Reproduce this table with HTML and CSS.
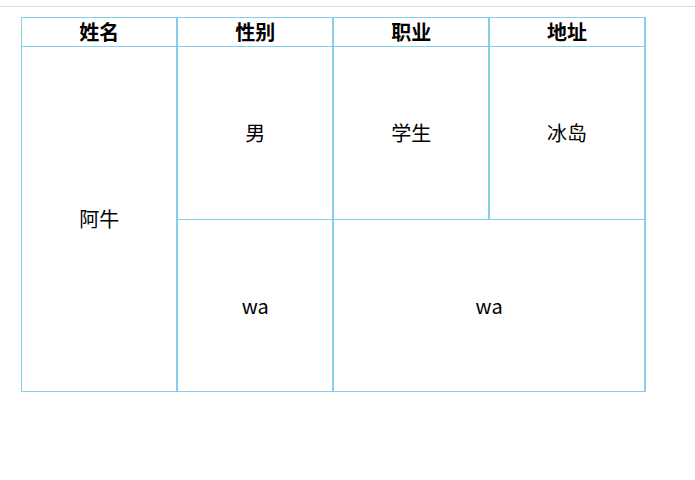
FILE: index.html
```html
<!DOCTYPE html>
<html lang="zh">
<head>
<meta charset="utf-8">
<title>表格</title>
<link rel="stylesheet" href="styles.css">
</head>
<body>
<div class="topline"></div>
<table class="info">
  <thead>
    <tr><th>姓名</th><th>性别</th><th>职业</th><th>地址</th></tr>
  </thead>
  <tbody>
    <tr class="r1"><td rowspan="2">阿牛</td><td>男</td><td>学生</td><td>冰岛</td></tr>
    <tr class="r2"><td>wa</td><td colspan="2">wa</td></tr>
  </tbody>
</table>
</body>
</html>
```
FILE: styles.css
```css
html, body {
  margin: 0;
  padding: 0;
  background: #fff;
}
body {
  font-family: "Noto Sans CJK SC", "Noto Sans", sans-serif;
  color: #000;
}
.topline {
  height: 1px;
  margin-top: 6px;
  background: #dcdcdc;
}
.info {
  margin: 10px 0 0 21px;
  border-collapse: collapse;
  table-layout: fixed;
  width: 625px;
}
.info th, .info td {
  border: 1px solid #87ceeb;
  border-right: 2px solid #87ceeb;
  text-align: center;
  vertical-align: middle;
  padding: 0;
  font-size: 20px;
  line-height: 24px;
}
.info th {
  height: 28px;
  font-weight: bold;
}
.info .r1 td {
  height: 172px;
}
.info .r2 td {
  height: 171px;
}
```
